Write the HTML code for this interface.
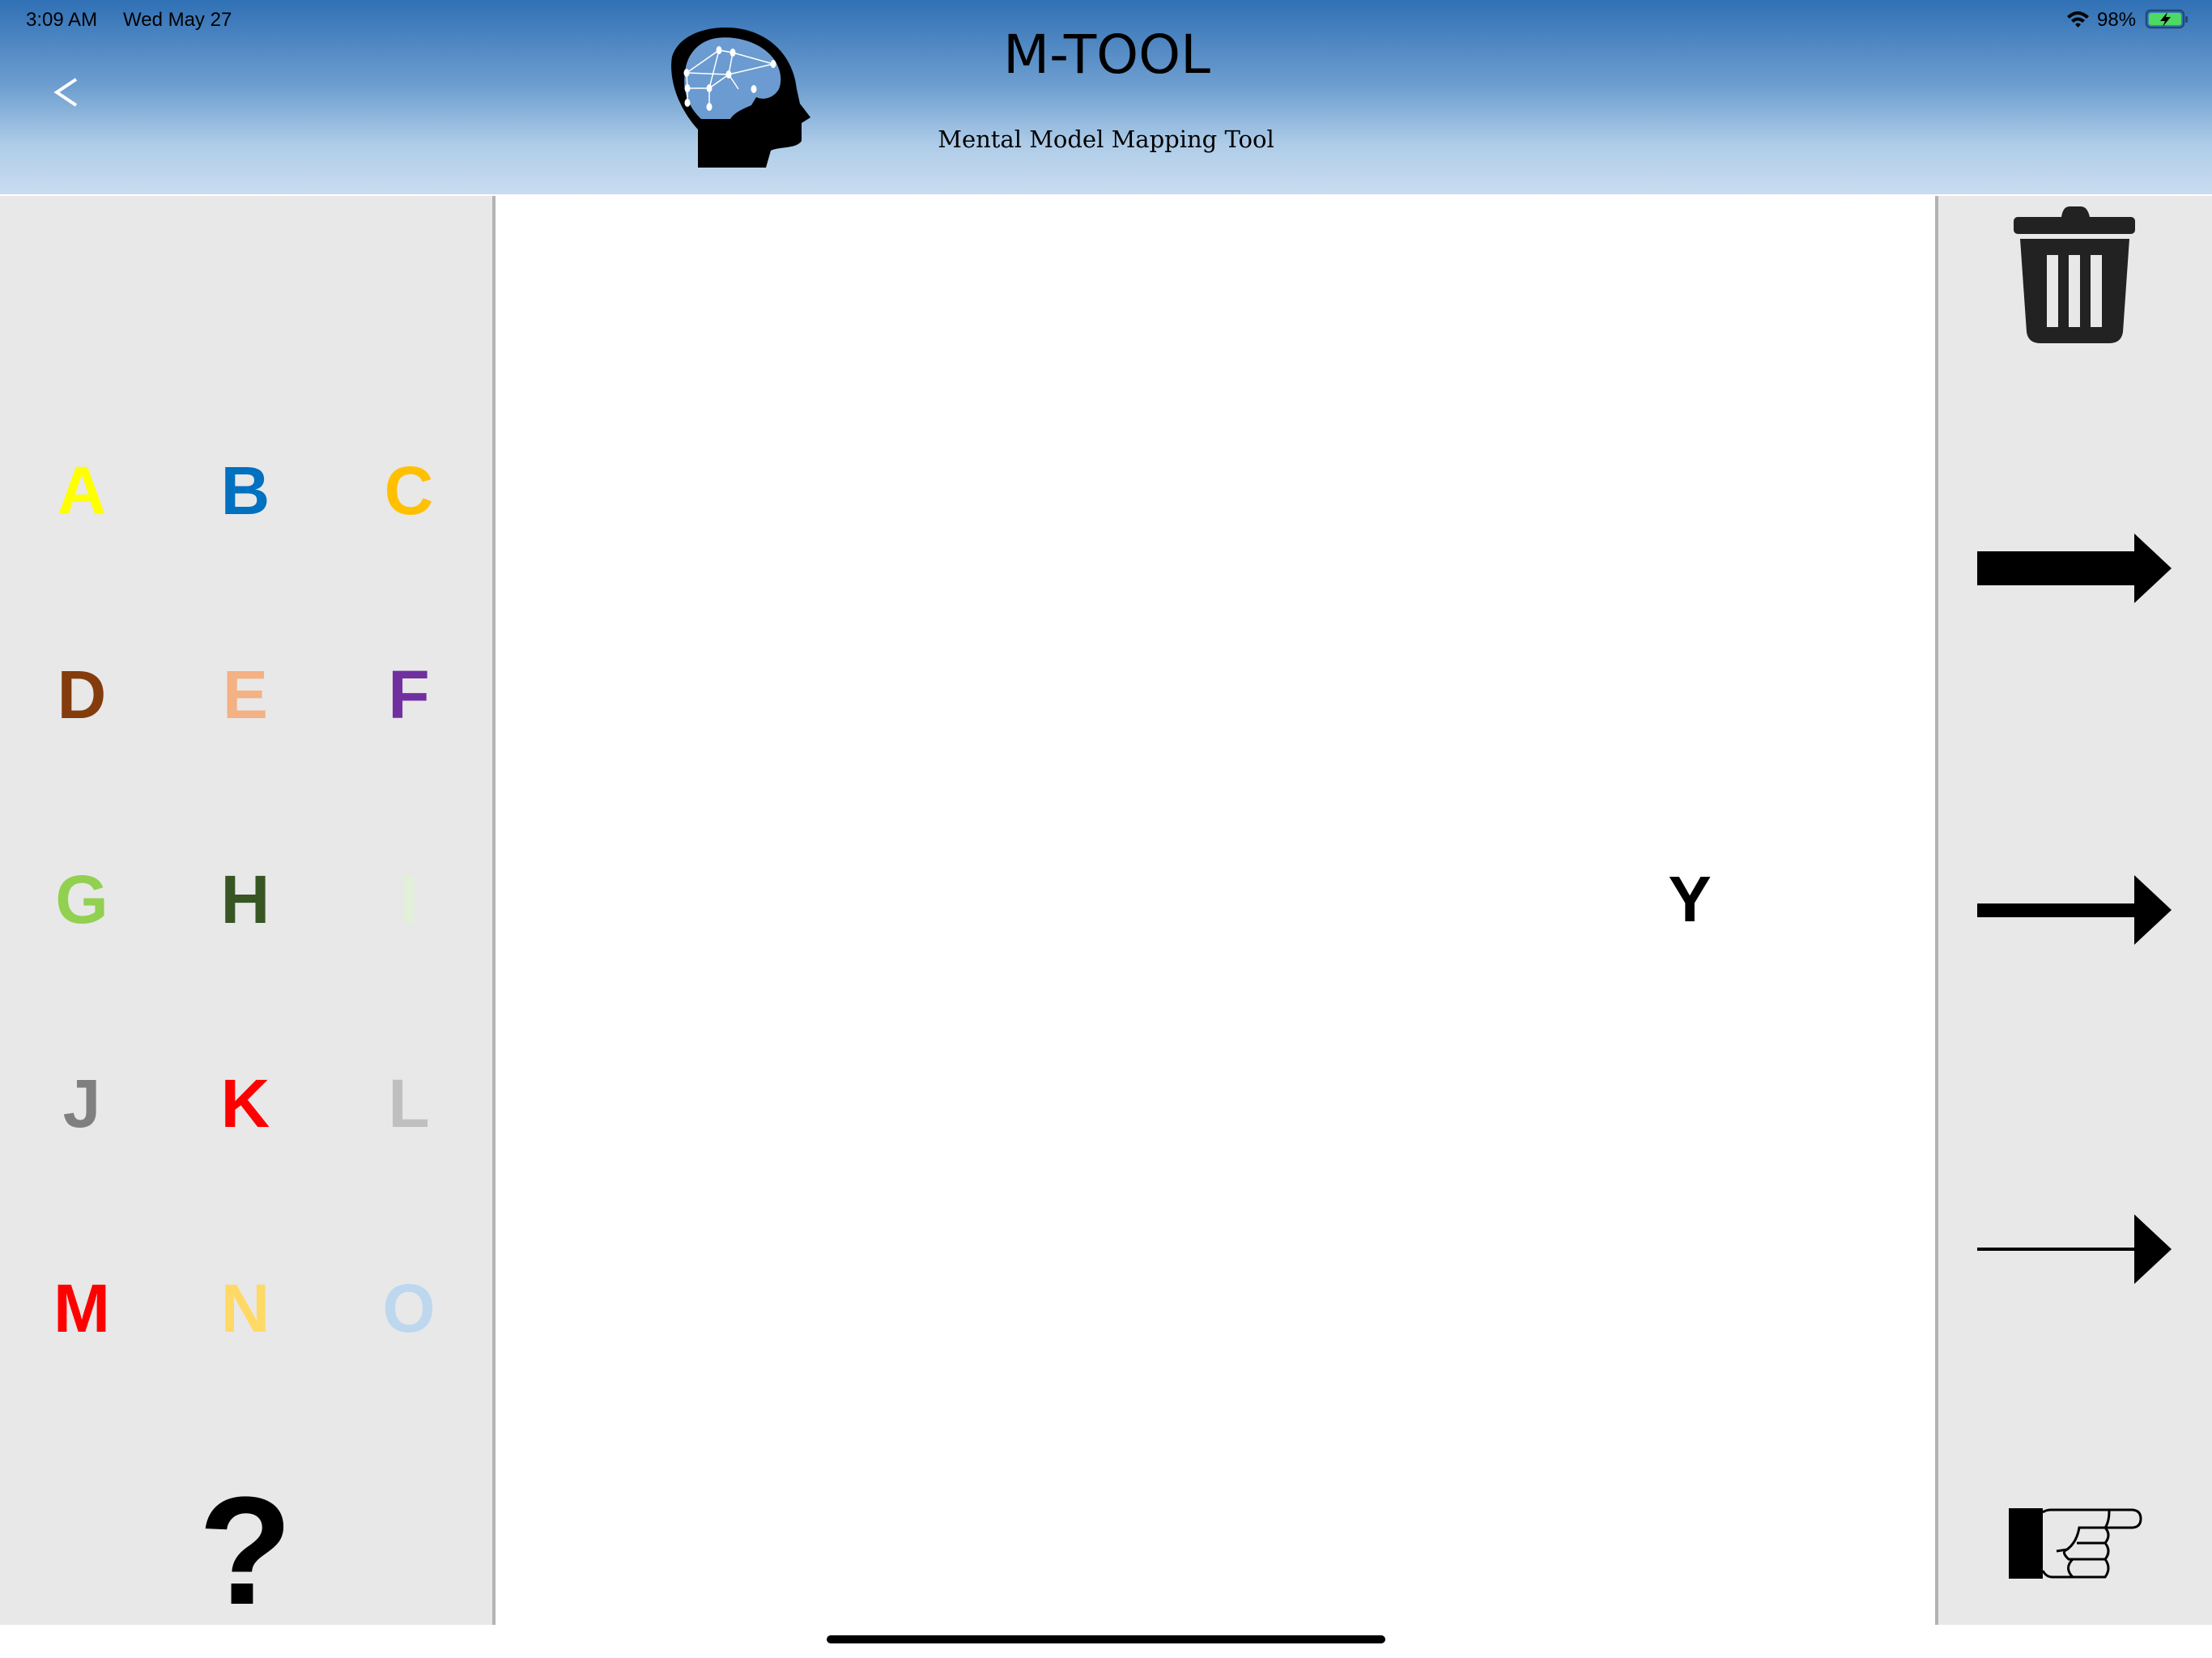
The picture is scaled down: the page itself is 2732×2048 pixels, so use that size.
<!DOCTYPE html>
<html><head><meta charset="utf-8"><style>
html,body{margin:0;padding:0;width:2732px;height:2048px;overflow:hidden;background:#fff}
svg{display:block}
</style></head><body>
<svg width="2732" height="2048" viewBox="0 0 2732 2048" xmlns="http://www.w3.org/2000/svg">
<defs>
<linearGradient id="hg" x1="0" y1="0" x2="0" y2="1">
<stop offset="0" stop-color="#3070b5"/>
<stop offset="0.45" stop-color="#6f9fd0"/>
<stop offset="0.75" stop-color="#afcde8"/>
<stop offset="1" stop-color="#c9dcf0"/>
</linearGradient>
</defs>
<rect x="0" y="0" width="2732" height="240" fill="url(#hg)"/>
<rect x="0" y="240" width="2732" height="1808" fill="#fff"/>
<rect x="0" y="242" width="608" height="1765" fill="#e8e8e8"/>
<rect x="608" y="242" width="4" height="1765" fill="#b3b3b3"/>
<rect x="2393" y="242" width="339" height="1765" fill="#e8e8e8"/>
<rect x="2390" y="242" width="4" height="1765" fill="#b3b3b3"/>

<text x="32" y="32" font-family="Liberation Sans, sans-serif" font-size="24" fill="#000">3:09 AM</text>
<text x="152" y="32" font-family="Liberation Sans, sans-serif" font-size="24" fill="#000">Wed May 27</text>
<g fill="#000">
<path d="M2553 20 Q2566 8 2580 20 L2577 23 Q2566 13 2556 23 Z"/>
<path d="M2558 25 Q2566 18 2575 25 L2572 28 Q2566 23 2561 28 Z"/>
<path d="M2563 30 Q2566 27 2570 30 L2566.5 34 Z"/>
</g>
<text x="2590" y="32" font-family="Liberation Sans, sans-serif" font-size="24" fill="#000">98%</text>
<rect x="2651" y="13" width="46" height="21" rx="5" fill="none" stroke="#1f4a78" stroke-width="2.5"/>
<rect x="2654" y="16" width="40" height="15" rx="3" fill="#4cd964"/>
<rect x="2699" y="20" width="3" height="8" rx="1" fill="#1f4a78"/>
<path d="M2677 15 L2668 26 L2674 26 L2671 33 L2681 21 L2675 21 Z" fill="#000"/>

<path d="M94 98 L70 114 L94 130" fill="none" stroke="#fff" stroke-width="4"/>

<path d="M862 207 L862 160 C835 130 826 95 830 70 C838 44 870 33 900 34 C950 36 980 70 984 110 L988 128 L1001 145 L990 152 L990 174 C984 184 962 181 952 186 L946 207 Z" fill="#000"/>
<path d="M866 147 C848 130 843 110 846 90 C848 65 865 50 885 47 C905 44 930 50 945 62 C962 75 968 95 962 110 C955 122 942 124 934 120 L928 130 C916 135 906 140 902 147 Z" fill="#6b9bd0"/>
<g stroke="#fff" stroke-width="1.5" fill="none">
<path d="M888 62 L905 65 L955 79 M888 62 L848 90 L900 92 L955 79 M905 65 L900 92 L912 110 M888 62 L876 109 L849 109 L849 127 M900 92 L876 109 L876 132 M848 90 L849 109"/>
</g>
<g fill="#fff">
<ellipse cx="888" cy="62" rx="3.5" ry="5"/><ellipse cx="905" cy="65" rx="3.5" ry="5"/><ellipse cx="955" cy="79" rx="3.5" ry="5"/>
<ellipse cx="848" cy="90" rx="3.5" ry="5"/><ellipse cx="900" cy="92" rx="3.5" ry="5"/><ellipse cx="849" cy="109" rx="3.5" ry="5"/>
<ellipse cx="876" cy="109" rx="3.5" ry="5"/><ellipse cx="931" cy="110" rx="3.5" ry="5"/><ellipse cx="849" cy="127" rx="3.5" ry="5"/>
<ellipse cx="876" cy="132" rx="3.5" ry="5"/>
</g>

<text x="1367" y="90" text-anchor="middle" font-family="DejaVu Sans, sans-serif" font-size="66" fill="#000">M-TOOL</text>
<text x="1366" y="182" text-anchor="middle" font-family="DejaVu Serif, serif" font-size="29" fill="#000">Mental Model Mapping Tool</text>

<g font-family="Liberation Sans, sans-serif" font-weight="bold" font-size="84" text-anchor="middle">
<text x="101" y="635" fill="#ffff00">A</text>
<text x="303" y="635" fill="#0070c0">B</text>
<text x="505" y="635" fill="#ffc000">C</text>
<text x="101" y="887" fill="#843c0c">D</text>
<text x="303" y="887" fill="#f4b183">E</text>
<text x="505" y="887" fill="#7030a0">F</text>
<text x="101" y="1140" fill="#92d050">G</text>
<text x="303" y="1140" fill="#375623">H</text>
<text x="505" y="1140" fill="#e2f0d9">I</text>
<text x="101" y="1392" fill="#7f7f7f">J</text>
<text x="303" y="1392" fill="#ff0000">K</text>
<text x="505" y="1392" fill="#bfbfbf">L</text>
<text x="101" y="1645" fill="#ff0000">M</text>
<text x="303" y="1645" fill="#ffd966">N</text>
<text x="505" y="1645" fill="#bdd7ee">O</text>
</g>
<text x="303" y="1981" text-anchor="middle" font-family="Liberation Sans, sans-serif" font-weight="bold" font-size="190" fill="#000">?</text>

<text x="2087" y="1138" text-anchor="middle" font-family="Liberation Sans, sans-serif" font-weight="bold" font-size="80" fill="#000">Y</text>

<g fill="#222">
<path d="M2546 268 Q2548 255 2556 255 L2570 255 Q2578 255 2581 268 Z"/>
<rect x="2487" y="268" width="150" height="21" rx="5"/>
<path d="M2495 295 L2630 295 L2622 410 Q2620 424 2605 424 L2520 424 Q2505 424 2503 410 Z"/>
</g>
<g fill="#e8e8e8">
<rect x="2528" y="315" width="14" height="89"/>
<rect x="2555" y="315" width="14" height="89"/>
<rect x="2582" y="315" width="14" height="89"/>
</g>

<rect x="2442" y="681" width="200" height="42" fill="#000"/>
<path d="M2636 659 L2682 702 L2636 745 Z" fill="#000"/>
<rect x="2442" y="1116" width="200" height="17" fill="#000"/>
<path d="M2636 1081 L2682 1124 L2636 1167 Z" fill="#000"/>
<rect x="2442" y="1541" width="200" height="4" fill="#000"/>
<path d="M2636 1500 L2682 1543 L2636 1586 Z" fill="#000"/>

<rect x="2481" y="1863" width="42" height="87" fill="#000"/>
<g fill="none" stroke="#000" stroke-width="3">
<path d="M2523 1868 Q2527 1865 2533 1865 L2634 1865 Q2644 1866 2644 1876 Q2644 1886 2634 1887 L2600 1887"/>
<path d="M2523 1940 Q2527 1948 2535 1948 L2600 1948"/>
<path d="M2605 1866 Q2605 1880 2600 1887 L2568 1887 Q2565 1905 2553 1914 L2540 1916"/>
<path d="M2600 1887 Q2608 1896 2600 1906 L2565 1906"/>
<path d="M2600 1906 Q2608 1916 2600 1926 L2555 1926 Q2545 1917 2553 1914"/>
<path d="M2600 1926 Q2608 1937 2600 1948 L2560 1948 Q2549 1937 2560 1926"/>
</g>

<rect x="1021" y="2020" width="690" height="10" rx="5" fill="#000"/>
</svg>
</body></html>
